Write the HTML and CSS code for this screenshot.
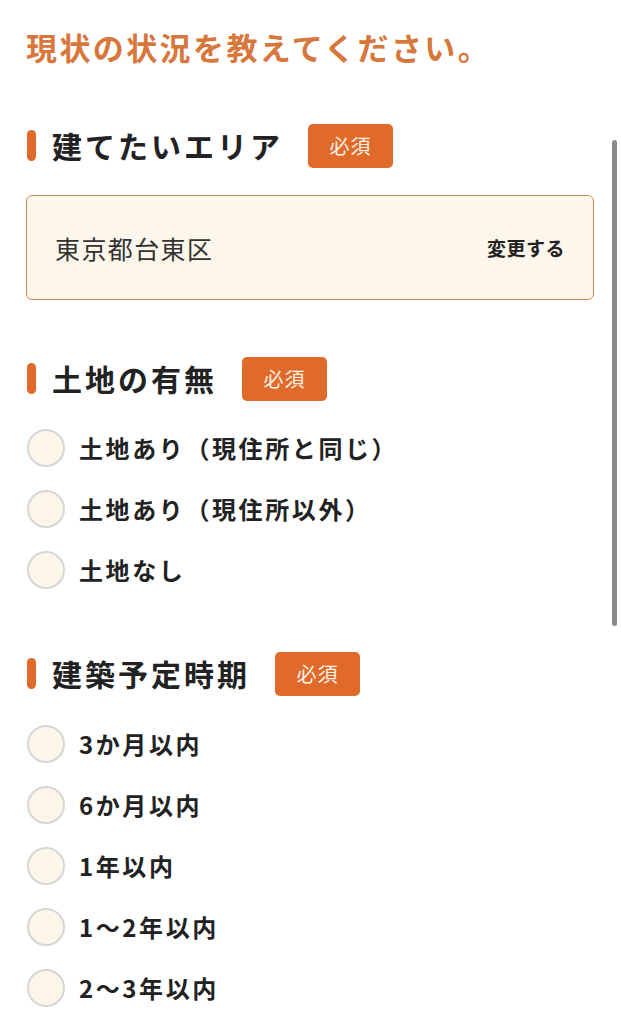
FILE: index.html
```html
<!DOCTYPE html>
<html lang="ja">
<head>
<meta charset="utf-8">
<title>現状の状況</title>
<link rel="stylesheet" href="styles.css">
</head>
<body>
<main class="page">
  <h1 class="title">現状の状況を教えてください。</h1>

  <section class="section s-area">
    <div class="sec-head">
      <span class="bar"></span>
      <h2 class="sec-title">建てたいエリア</h2>
      <span class="badge">必須</span>
    </div>
    <div class="area-box">
      <span class="area-name">東京都台東区</span>
      <span class="area-change">変更する</span>
    </div>
  </section>

  <section class="section s-land">
    <div class="sec-head">
      <span class="bar"></span>
      <h2 class="sec-title">土地の有無</h2>
      <span class="badge">必須</span>
    </div>
    <ul class="options">
      <li class="option"><span class="radio"></span><span class="opt-label">土地あり（現住所と同じ）</span></li>
      <li class="option"><span class="radio"></span><span class="opt-label">土地あり（現住所以外）</span></li>
      <li class="option"><span class="radio"></span><span class="opt-label">土地なし</span></li>
    </ul>
  </section>

  <section class="section s-time">
    <div class="sec-head">
      <span class="bar"></span>
      <h2 class="sec-title">建築予定時期</h2>
      <span class="badge">必須</span>
    </div>
    <ul class="options">
      <li class="option"><span class="radio"></span><span class="opt-label">3か月以内</span></li>
      <li class="option"><span class="radio"></span><span class="opt-label">6か月以内</span></li>
      <li class="option"><span class="radio"></span><span class="opt-label">1年以内</span></li>
      <li class="option"><span class="radio"></span><span class="opt-label">1〜2年以内</span></li>
      <li class="option"><span class="radio"></span><span class="opt-label">2〜3年以内</span></li>
    </ul>
  </section>
</main>
<div class="scrollbar"></div>
</body>
</html>
```
FILE: styles.css
```css
html, body {
  margin: 0;
  padding: 0;
  background: #ffffff;
}
body {
  font-family: "Noto Sans CJK JP", "Noto Sans", sans-serif;
  color: #222222;
  overflow: hidden;
}
.page {
  padding: 27px 27px 0 26px;
}
.title {
  margin: 0;
  font-size: 31px;
  line-height: 40px;
  font-weight: 700;
  color: #d8773b;
  letter-spacing: 2.4px;
}
.section {
  margin-top: 56px;
}
.s-time {
  margin-top: 51px;
}
.sec-head {
  display: flex;
  align-items: center;
  height: 45px;
}
.bar {
  width: 9px;
  height: 31px;
  border-radius: 5px;
  background: #e06a2a;
  margin-left: 1px;
  margin-right: 16px;
  flex: none;
}
.sec-title {
  margin: 0;
  font-size: 30px;
  line-height: 45px;
  font-weight: 700;
  letter-spacing: 3px;
  color: #222222;
}
.badge {
  margin-left: 25px;
  width: 85px;
  height: 44px;
  border-radius: 5px;
  background: #e06a2a;
  color: #fff1e6;
  font-size: 20px;
  font-weight: 400;
  display: flex;
  align-items: center;
  justify-content: center;
  letter-spacing: 1px;
}
.area-box {
  margin-top: 27px;
  height: 103px;
  border: 1.5px solid #d48a52;
  border-radius: 6px;
  background: #fdf6ea;
  display: flex;
  align-items: center;
  justify-content: space-between;
  padding: 0 28px 0 28px;
}
.area-name {
  font-size: 25px;
  font-weight: 400;
  color: #333333;
  letter-spacing: 1.4px;
}
.area-change {
  font-size: 19px;
  font-weight: 700;
  color: #222222;
  letter-spacing: 0.5px;
}
.options {
  list-style: none;
  margin: 16px 0 0 0;
  padding: 0;
}
.s-time .options {
  margin-top: 17px;
}
.option {
  display: flex;
  align-items: center;
  height: 61px;
}
.radio {
  width: 34px;
  height: 34px;
  border: 2.5px solid #d6d6d6;
  border-radius: 50%;
  background: #fcf6e9;
  margin-left: 1px;
  flex: none;
}
.opt-label {
  margin-left: 14px;
  font-size: 24px;
  font-weight: 700;
  letter-spacing: 2.6px;
  color: #222222;
}
.scrollbar {
  position: fixed;
  top: 140px;
  left: 612px;
  width: 5px;
  height: 486px;
  border-radius: 3px;
  background: #8a8a8a;
}
```
